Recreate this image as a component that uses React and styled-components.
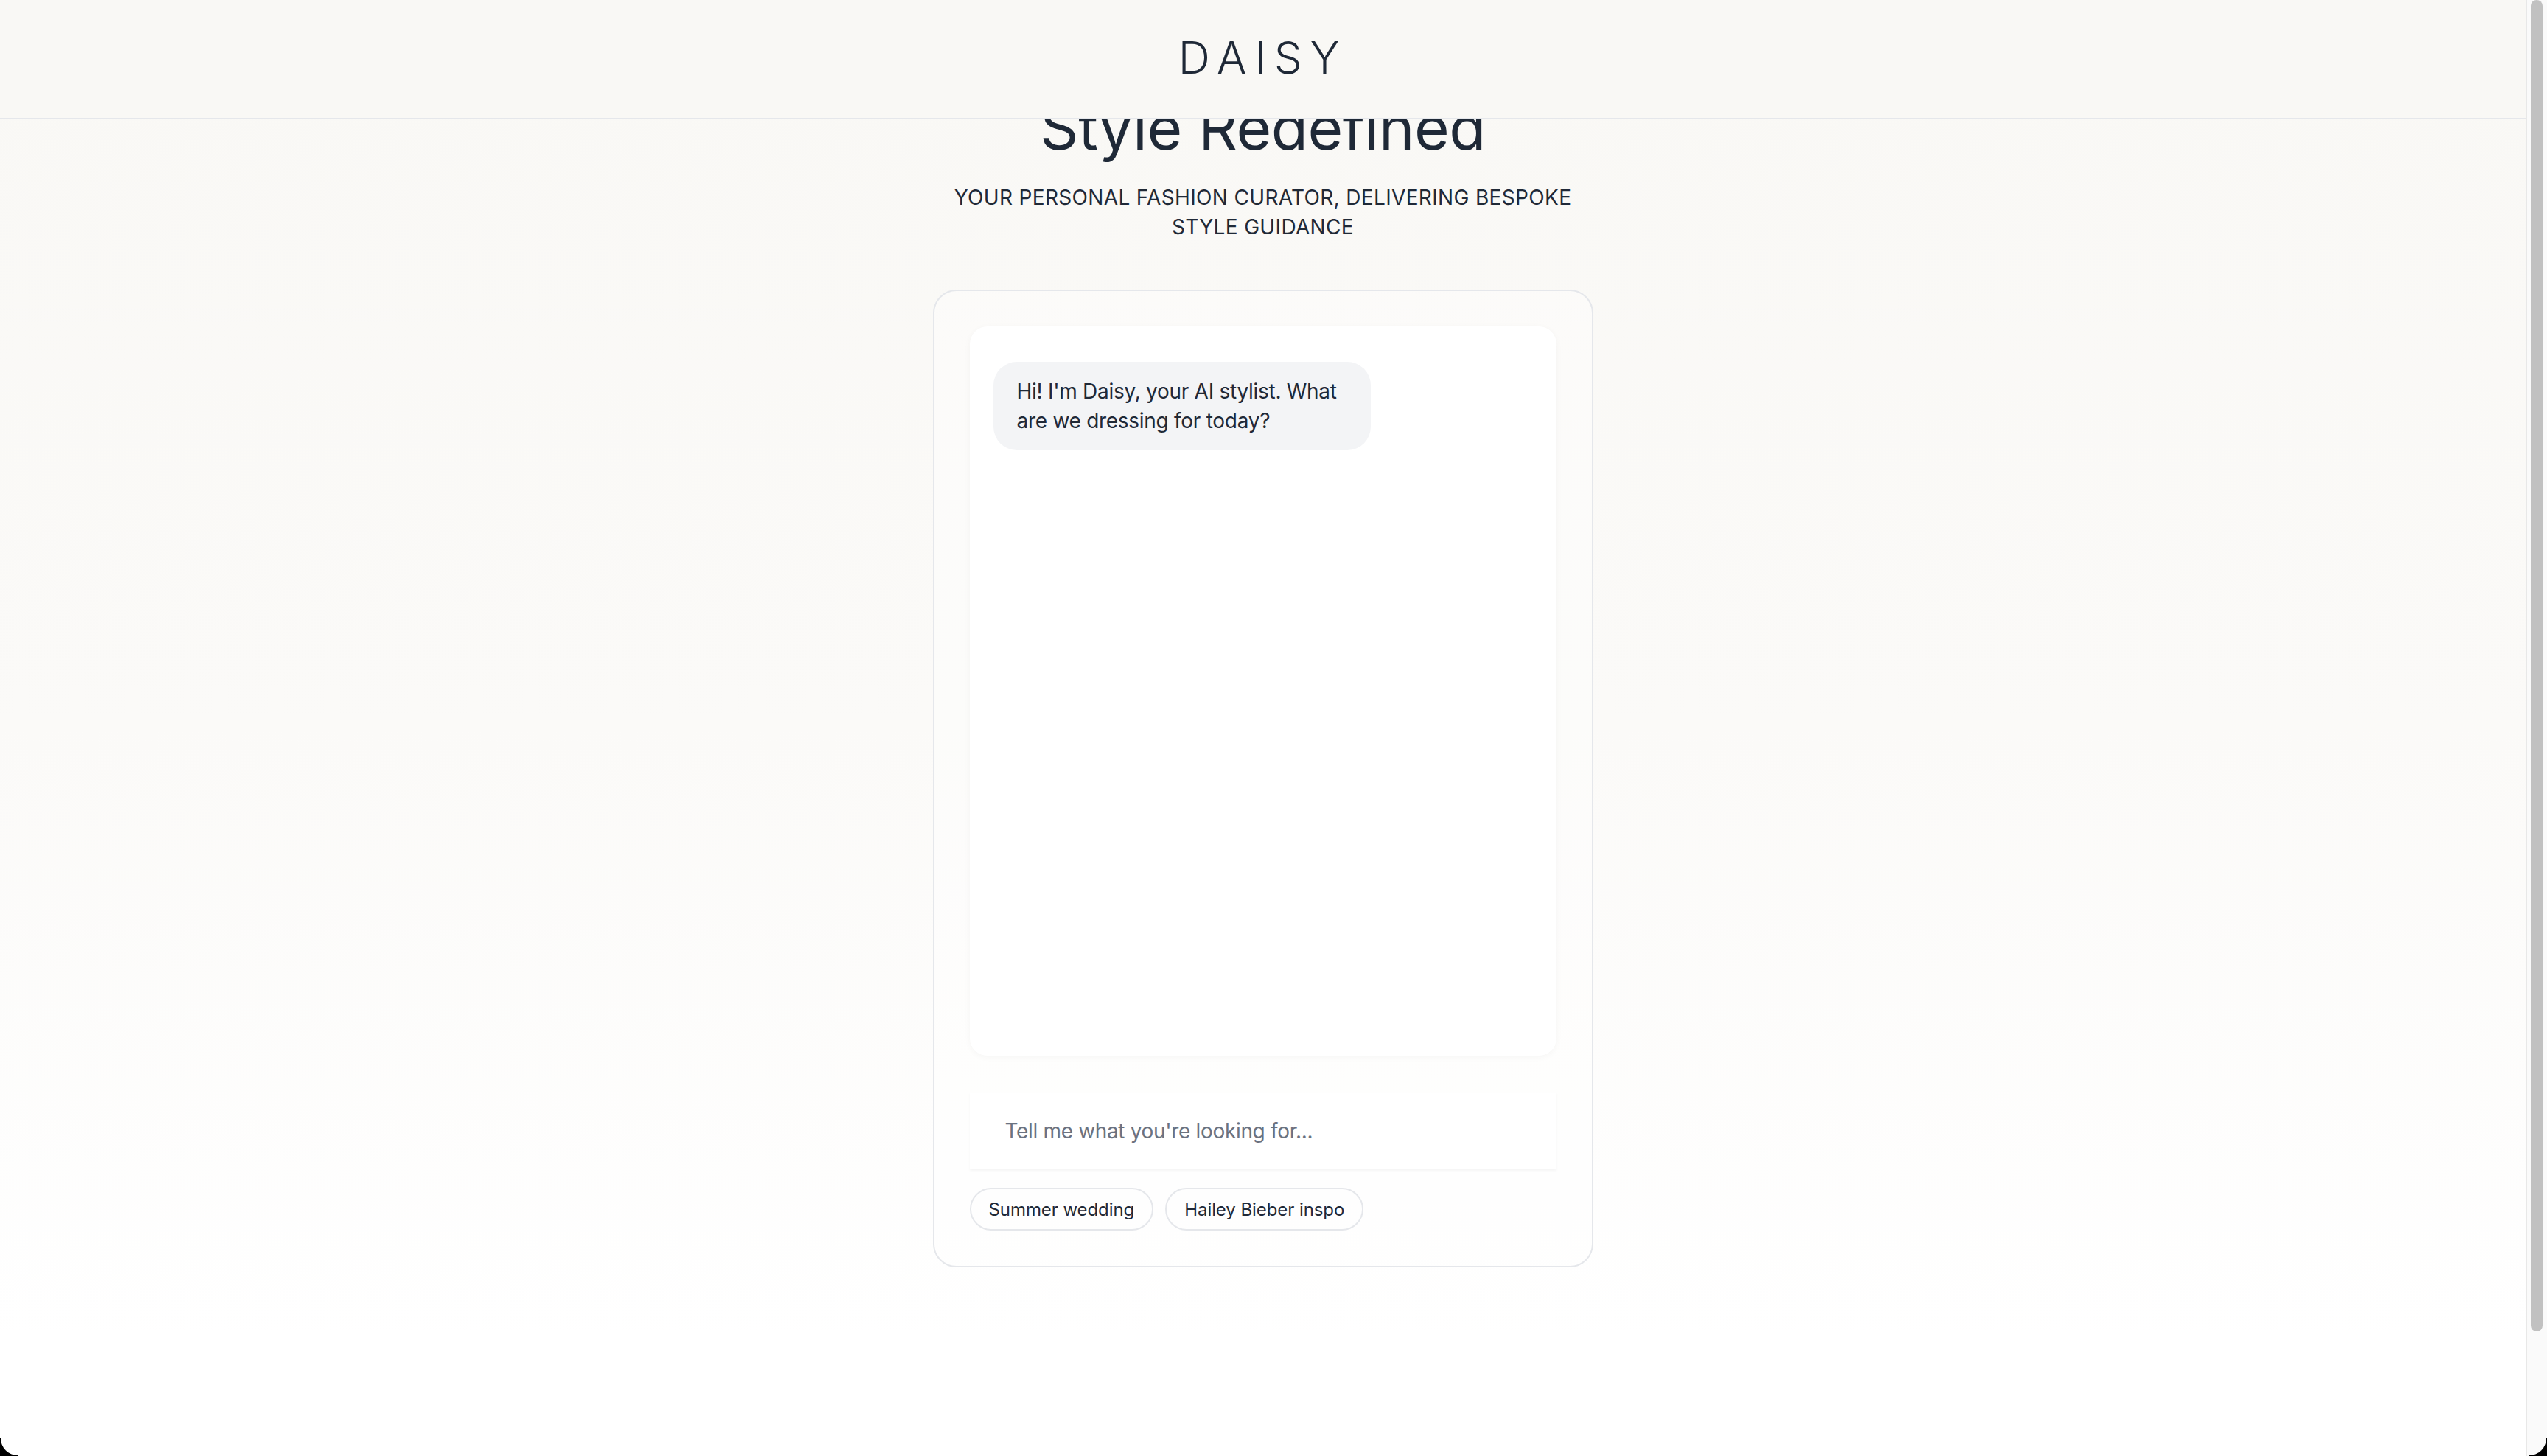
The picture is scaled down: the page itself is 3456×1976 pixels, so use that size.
import React from "react";
import styled, { createGlobalStyle } from "styled-components";

const GlobalStyle = createGlobalStyle`
  html, body {
    margin: 0;
    padding: 0;
    height: 100%;
    overflow: hidden;
  }
  body {
    font-family: Inter, "Noto Sans", "Liberation Sans", sans-serif;
    color: #1f2937;
    -webkit-font-smoothing: antialiased;
  }
  * { box-sizing: border-box; }
`;

const Shell = styled.div`
  display: grid;
  grid-template-columns: 1fr 29px;
  height: 100vh;
  width: 100vw;
`;

const Page = styled.div`
  position: relative;
  overflow: hidden;
  background: linear-gradient(to bottom, #f9f8f5 0%, #fbfaf8 50%, #ffffff 92%);
`;

const Header = styled.header`
  position: absolute;
  top: 0;
  left: 0;
  right: 0;
  height: 162px;
  display: flex;
  align-items: center;
  justify-content: center;
  padding-bottom: 4px;
  background: #f9f8f5;
  border-bottom: 2px solid #e5e7eb;
  z-index: 10;
`;

const Logo = styled.div`
  font-size: 60px;
  font-weight: 300;
  letter-spacing: 0.18em;
  color: #1f2937;
  line-height: 1;
`;

const Main = styled.main`
  display: flex;
  flex-direction: column;
  align-items: center;
  padding-top: 133px;
`;

const Title = styled.h1`
  margin: 0;
  font-size: 82px;
  line-height: 82px;
  font-weight: 400;
  letter-spacing: -0.006em;
  color: #1f2937;
`;

const Subtitle = styled.p`
  margin: 33px 0 0;
  max-width: 896px;
  text-align: center;
  font-size: 28px;
  line-height: 40px;
  letter-spacing: 0.012em;
  text-transform: uppercase;
  color: #1f2937;
`;

const Card = styled.section`
  margin-top: 65px;
  width: 896px;
  padding: 48px;
  border: 2px solid #e5e7eb;
  border-radius: 32px;
  background: rgba(255, 255, 255, 0.35);
  display: flex;
  flex-direction: column;
`;

const ChatBox = styled.div`
  height: 990px;
  background: #ffffff;
  border-radius: 24px;
  box-shadow: 0 2px 10px rgba(0, 0, 0, 0.035);
  padding: 48px 32px 32px;
  display: flex;
  flex-direction: column;
  align-items: flex-start;
`;

const Bubble = styled.div`
  max-width: 70%;
  padding: 20px 32px;
  background: #f3f4f6;
  border-radius: 32px;
  font-size: 28px;
  line-height: 40px;
  letter-spacing: -0.01em;
  color: #1f2937;
`;

const InputRow = styled.div`
  margin-top: 50px;
  height: 104px;
  background: #ffffff;
  box-shadow: 0 2px 3px rgba(0, 0, 0, 0.04);
  display: flex;
  align-items: center;
  padding: 0 48px;
`;

const TextInput = styled.input`
  flex: 1;
  border: none;
  outline: none;
  background: transparent;
  font-family: inherit;
  font-size: 28px;
  letter-spacing: -0.012em;
  color: #1f2937;
  padding: 0;
  &::placeholder {
    color: #6b7280;
  }
`;

const Chips = styled.div`
  margin-top: 25px;
  display: flex;
  gap: 16px;
`;

const Chip = styled.button`
  height: 58px;
  padding: 0 24px;
  border: 2px solid #e5e7eb;
  border-radius: 999px;
  background: transparent;
  font-family: inherit;
  font-size: 24px;
  letter-spacing: -0.003em;
  color: #1f2937;
  cursor: pointer;
`;

const ScrollTrack = styled.div`
  background: #fafafa;
  border-left: 2px solid #e8e8e8;
  padding-left: 5px;
`;

const ScrollThumb = styled.div`
  width: 16px;
  height: 1807px;
  border-radius: 8px;
  background: #c1c1c1;
`;

const Corner = styled.div`
  position: fixed;
  bottom: 0;
  width: 24px;
  height: 24px;
  z-index: 50;
  ${(p) => (p.$side === "left" ? "left: 0;" : "right: 0;")}
  background: ${(p) =>
    p.$side === "left"
      ? "radial-gradient(circle at 24px 0, transparent 22.5px, #000 23.5px)"
      : "radial-gradient(circle at 0 0, transparent 22.5px, #000 23.5px)"};
`;

export default function App() {
  return (
    <>
      <GlobalStyle />
      <Shell>
        <Page>
          <Header>
            <Logo>DAISY</Logo>
          </Header>
          <Main>
            <Title>Style Redefined</Title>
            <Subtitle>
              Your personal fashion curator, delivering bespoke style guidance
            </Subtitle>
            <Card>
              <ChatBox>
                <Bubble>
                  Hi! I'm Daisy, your AI stylist. What are we dressing for today?
                </Bubble>
              </ChatBox>
              <InputRow>
                <TextInput placeholder="Tell me what you're looking for..." />
              </InputRow>
              <Chips>
                <Chip>Summer wedding</Chip>
                <Chip>Hailey Bieber inspo</Chip>
              </Chips>
            </Card>
          </Main>
        </Page>
        <ScrollTrack>
          <ScrollThumb />
        </ScrollTrack>
      </Shell>
      <Corner $side="left" />
      <Corner $side="right" />
    </>
  );
}
